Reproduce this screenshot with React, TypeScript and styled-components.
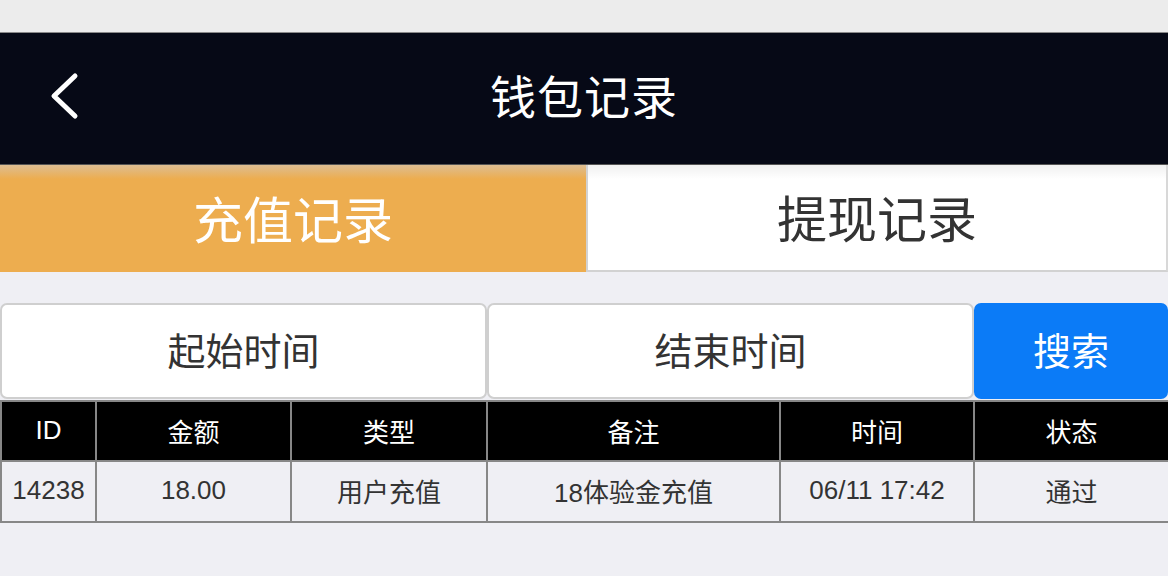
import styled, { createGlobalStyle } from "styled-components";

const GlobalStyle = createGlobalStyle`
  html, body {
    margin: 0;
    padding: 0;
    background: #efeff4;
    font-family: "Liberation Sans", "Noto Sans CJK SC", sans-serif;
  }
  * { box-sizing: border-box; }
`;

interface Irecord {
  id: number;
  amount: string;
  type: string;
  note: string;
  time: string;
  status: string;
}

const records: Irecord[] = [
  {
    id: 14238,
    amount: "18.00",
    type: "用户充值",
    note: "18体验金充值",
    time: "06/11 17:42",
    status: "通过",
  },
];

const columns = [
  { title: "ID", width: 95 },
  { title: "金额", width: 195 },
  { title: "类型", width: 196 },
  { title: "备注", width: 293 },
  { title: "时间", width: 194 },
  { title: "状态", width: 195 },
];

const App = () => {
  return (
    <>
      <GlobalStyle />
      <Page>
        <StatusBar />
        <NavBar>
          <Back aria-label="back">
            <svg width="32" height="48" viewBox="0 0 32 48">
              <path
                d="M26 4 L5 24 L26 44"
                fill="none"
                stroke="#fff"
                strokeWidth="5"
                strokeLinecap="round"
                strokeLinejoin="round"
              />
            </svg>
          </Back>
          <Title>钱包记录</Title>
        </NavBar>
        <Tabs>
          <Tab $active>充值记录</Tab>
          <Tab>提现记录</Tab>
        </Tabs>
        <SearchRow>
          <DateField>起始时间</DateField>
          <DateField>结束时间</DateField>
          <SearchButton>搜索</SearchButton>
        </SearchRow>
        <Table>
          <colgroup>
            {columns.map((c) => (
              <col key={c.title} style={{ width: c.width }} />
            ))}
          </colgroup>
          <thead>
            <tr>
              {columns.map((c) => (
                <Th key={c.title}>{c.title}</Th>
              ))}
            </tr>
          </thead>
          <tbody>
            {records.map((item: Irecord) => (
              <tr key={item.id}>
                <Td>{item.id}</Td>
                <Td>{item.amount}</Td>
                <Td>{item.type}</Td>
                <Td>{item.note}</Td>
                <Td>{item.time}</Td>
                <Td>{item.status}</Td>
              </tr>
            ))}
          </tbody>
        </Table>
      </Page>
    </>
  );
};

const Page = styled.div`
  width: 1168px;
  min-height: 576px;
  background: #efeff4;
`;
const StatusBar = styled.div`
  height: 33px;
  background: #ececec;
  border-bottom: 1px solid #8a8a8a;
`;
const NavBar = styled.header`
  position: relative;
  height: 132px;
  padding-bottom: 10px;
  background: #060916;
  border-bottom: 1px solid #555;
  display: flex;
  align-items: center;
  justify-content: center;
`;
const Back = styled.button`
  position: absolute;
  left: 49px;
  top: 39px;
  background: none;
  border: 0;
  padding: 0;
  display: flex;
`;
const Title = styled.h1`
  margin: 0;
  color: #fff;
  font-size: 46px;
  font-weight: 400;
  letter-spacing: 1px;
`;
const Tabs = styled.div`
  display: grid;
  grid-template-columns: 586px 1fr;
  height: 107px;
`;
const Tab = styled.div<{ $active?: boolean }>`
  display: flex;
  align-items: center;
  justify-content: center;
  padding-bottom: 4px;
  font-size: 50px;
  color: ${(p) => (p.$active ? "#fff" : "#333")};
  background: ${(p) =>
    p.$active
      ? "linear-gradient(rgba(210,200,190,0.6), rgba(237,173,79,0) 14px), #edad4f"
      : "linear-gradient(rgba(0,0,0,0.06), rgba(0,0,0,0) 14px), #fff"};
  border-left: ${(p) => (p.$active ? "none" : "2px solid #d2d2d2")};
  border-bottom: ${(p) => (p.$active ? "none" : "2px solid #d2d2d2")};
  border-right: ${(p) => (p.$active ? "none" : "2px solid #d8d8d8")};
`;
const SearchRow = styled.div`
  display: grid;
  grid-template-columns: 487px 487px 1fr;
  height: 96px;
  margin-top: 31px;
`;
const DateField = styled.div`
  display: flex;
  align-items: center;
  justify-content: center;
  padding-bottom: 6px;
  background: #fff;
  border: 2px solid #cfcfcf;
  border-radius: 7px;
  font-size: 38px;
  color: #333;
`;
const SearchButton = styled.button`
  background: #0b7bf7;
  border: 0;
  border-radius: 7px;
  color: #fff;
  font-family: inherit;
  font-size: 38px;
  padding: 0 0 6px;
`;
const Table = styled.table`
  width: 1168px;
  margin-top: 1px;
  border-collapse: collapse;
  table-layout: fixed;
  border: 2px solid #878787;
`;
const Th = styled.th`
  height: 60px;
  background: #000;
  color: #fff;
  font-size: 26px;
  font-weight: 400;
  border: 2px solid #878787;
  text-align: center;
  padding: 0 0 2px;
`;
const Td = styled.td`
  height: 61px;
  background: #efeff4;
  color: #333;
  font-size: 26px;
  border: 2px solid #878787;
  text-align: center;
  padding: 0 0 2px;
  white-space: nowrap;
`;

export default App;
